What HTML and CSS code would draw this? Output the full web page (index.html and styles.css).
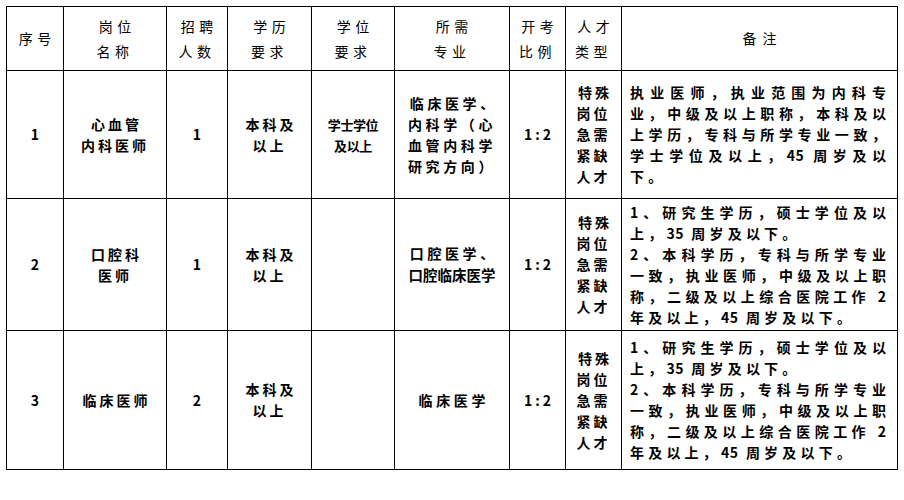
FILE: index.html
```html
<!DOCTYPE html>
<html lang="zh-CN">
<head>
<meta charset="utf-8">
<title>招聘岗位</title>
<link rel="stylesheet" href="styles.css">
</head>
<body>
<div class="page">
<table class="jobs">
  <colgroup>
    <col class="c1"><col class="c2"><col class="c3"><col class="c4"><col class="c5">
    <col class="c6"><col class="c7"><col class="c8"><col class="c9">
  </colgroup>
  <thead>
    <tr class="r-head">
      <th>序号</th>
      <th>岗位<br>名称</th>
      <th>招聘<br>人数</th>
      <th>学历<br>要求</th>
      <th>学位<br>要求</th>
      <th>所需<br>专业</th>
      <th>开考<br>比例</th>
      <th>人才<br>类型</th>
      <th class="wide">备注</th>
    </tr>
  </thead>
  <tbody>
    <tr class="r1">
      <td class="num">1</td>
      <td>心血管<br>内科医师</td>
      <td class="num">1</td>
      <td>本科及<br>以上</td>
      <td class="small">学士学位<br>及以上</td>
      <td class="major">临床医学、<br>内科学（心<br>血管内科学<br>研究方向）</td>
      <td class="num ratio">1:2</td>
      <td class="type">特殊<br>岗位<br>急需<br>紧缺<br>人才</td>
      <td class="note">
        <span class="ln">执业医师，执业范围为内科专</span>
        <span class="ln">业，中级及以上职称，本科及以</span>
        <span class="ln">上学历，专科与所学专业一致，</span>
        <span class="ln">学士学位及以上，<span class="dg">45</span> 周岁及以</span>
        <span class="ln last">下。</span>
      </td>
    </tr>
    <tr class="r2">
      <td class="num">2</td>
      <td>口腔科<br>医师</td>
      <td class="num">1</td>
      <td>本科及<br>以上</td>
      <td></td>
      <td class="major">口腔医学、<br><span class="tight">口腔临床医学</span></td>
      <td class="num ratio">1:2</td>
      <td class="type">特殊<br>岗位<br>急需<br>紧缺<br>人才</td>
      <td class="note">
        <span class="ln">1、研究生学历，硕士学位及以</span>
        <span class="ln last">上，<span class="dg">35</span> 周岁及以下。</span>
        <span class="ln">2、本科学历，专科与所学专业</span>
        <span class="ln">一致，执业医师，中级及以上职</span>
        <span class="ln">称，二级及以上综合医院工作 2</span>
        <span class="ln last">年及以上，<span class="dg">45</span> 周岁及以下。</span>
      </td>
    </tr>
    <tr class="r3">
      <td class="num">3</td>
      <td>临床医师</td>
      <td class="num">2</td>
      <td>本科及<br>以上</td>
      <td></td>
      <td class="major">临床医学</td>
      <td class="num ratio">1:2</td>
      <td class="type">特殊<br>岗位<br>急需<br>紧缺<br>人才</td>
      <td class="note">
        <span class="ln">1、研究生学历，硕士学位及以</span>
        <span class="ln last">上，<span class="dg">35</span> 周岁及以下。</span>
        <span class="ln">2、本科学历，专科与所学专业</span>
        <span class="ln">一致，执业医师，中级及以上职</span>
        <span class="ln">称，二级及以上综合医院工作 2</span>
        <span class="ln last">年及以上，<span class="dg">45</span> 周岁及以下。</span>
      </td>
    </tr>
  </tbody>
</table>
</div>
</body>
</html>
```
FILE: styles.css
```css
html, body {
  margin: 0;
  padding: 0;
  background: #fff;
}
.page {
  padding: 6px 0 0 6px;
  font-family: "Noto Sans CJK SC", "Noto Sans", sans-serif;
  color: #000;
}
.jobs {
  border-collapse: collapse;
  table-layout: fixed;
  width: 892px;
}
.c1 { width: 57px; }
.c2 { width: 103px; }
.c3 { width: 61px; }
.c4 { width: 84px; }
.c5 { width: 83px; }
.c6 { width: 115px; }
.c7 { width: 56px; }
.c8 { width: 56px; }
.c9 { width: 276px; }

.jobs th, .jobs td {
  border: 1px solid #000;
  padding: 0;
  text-align: center;
  vertical-align: middle;
}
.jobs th {
  font-size: 14px;
  font-weight: 400;
  line-height: 25px;
  letter-spacing: 4.5px;
  text-indent: 4.5px;
}
.jobs th.wide {
  letter-spacing: 6px;
  text-indent: 6px;
}
.r-head { height: 64px; }
.r1 { height: 128px; }
.r2 { height: 132px; }
.r3 { height: 139px; }

.jobs td {
  font-size: 14px;
  font-weight: 700;
  line-height: 21px;
  letter-spacing: 3px;
  text-indent: 3px;
}
.jobs td.num {
  letter-spacing: 0;
  text-indent: 0;
}
.jobs td.ratio {
  letter-spacing: 3px;
  text-indent: 3px;
}
.jobs td.small {
  font-size: 13px;
  font-weight: 600;
  letter-spacing: -0.4px;
  text-indent: 0;
  line-height: 21px;
}
.jobs td.major {
  letter-spacing: 3.6px;
  text-indent: 3.6px;
}
.tight {
  letter-spacing: 0;
  font-size: 14.5px;
}
.jobs td.type {
  letter-spacing: 3px;
  text-indent: 3px;
}
.jobs td.note {
  text-align: left;
  text-indent: 0;
  letter-spacing: 0;
  padding: 0 11px 0 8px;
}
.ln {
  display: block;
  text-align: justify;
  text-align-last: justify;
}
.ln.last {
  text-align: left;
  text-align-last: left;
  letter-spacing: 4.2px;
}
.ln .dg {
  letter-spacing: 0.5px;
}
```
